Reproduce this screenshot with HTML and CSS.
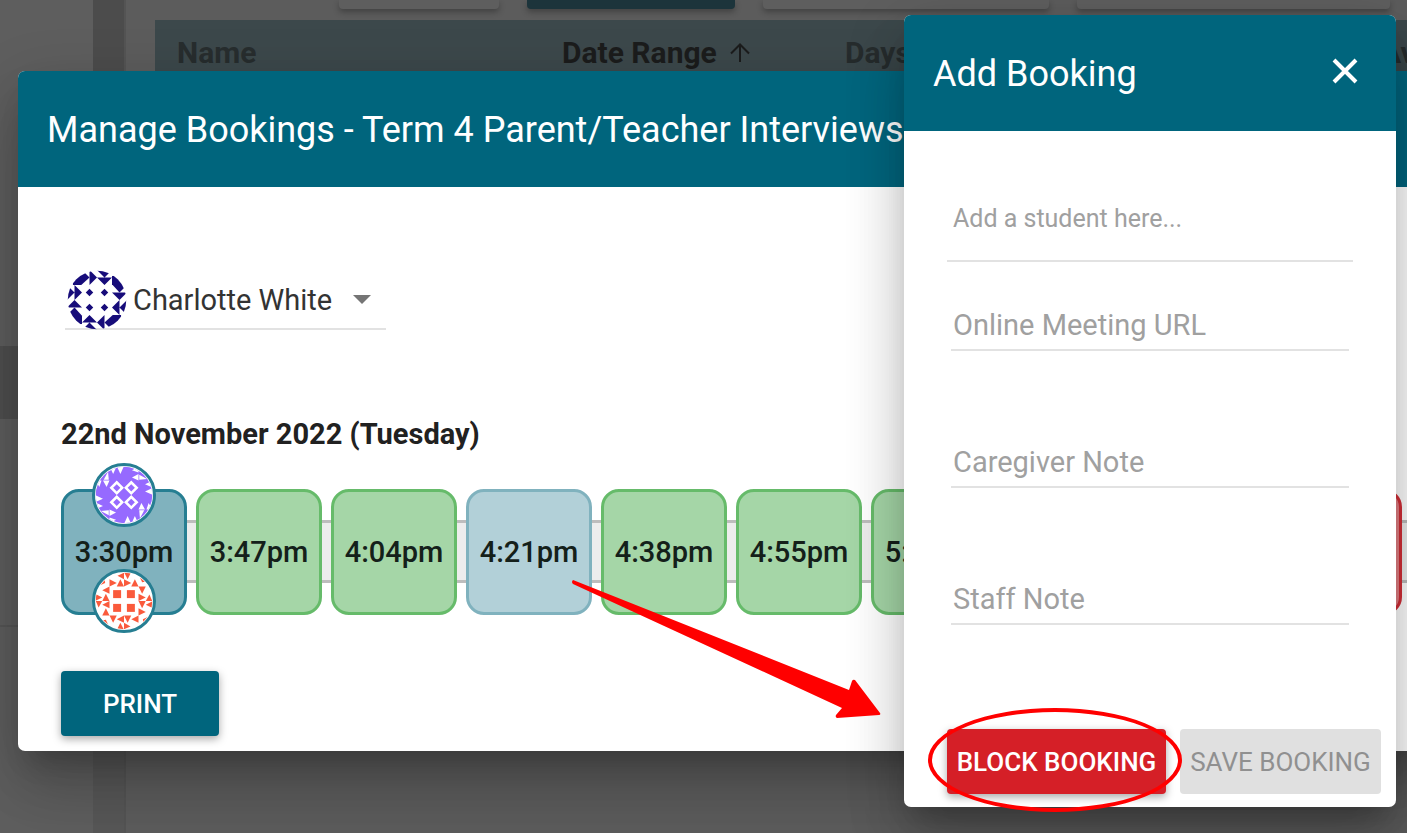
FILE: index.html
```
<!DOCTYPE html>
<html lang="en">
<head>
    <meta charset="UTF-8">
    <meta name="viewport" content="width=device-width, initial-scale=1.0">
    <title>Manage Bookings</title>
    <link rel="stylesheet" href="styles.css">
</head>
<body>
    <!-- Dimmed page behind the dialogs -->
    <div class="page">
        <nav class="sidebar">
            <div class="sidebar-item active"></div>
            <div class="sidebar-item"></div>
        </nav>
        <div class="scrollbar"><div class="scrollbar-thumb"></div></div>
        <main class="content">
            <div class="toolbar">
                <div class="tool small"></div>
                <div class="tool primary"></div>
                <div class="tool medium"></div>
                <div class="tool large"></div>
            </div>
            <table class="interviews">
                <thead>
                    <tr>
                        <th class="col-name">Name</th>
                        <th class="col-range sorted">Date Range
                            <svg class="sort-icon" viewBox="0 0 20 20"><path d="M10 19V2M1 10.500L10 1.500L19 10.500"/></svg>
                        </th>
                        <th class="col-days">Days</th>
                        <th>Av</th>
                    </tr>
                </thead>
            </table>
        </main>
    </div>

    <section class="dialog manage-dialog">
        <header class="dialog-header">
            <h1>Manage Bookings - Term 4 Parent/Teacher Interviews</h1>
        </header>
        <div class="manage-body">
            <div class="staff-picker">
                <svg class="avatar" viewBox="0 0 80 80">
                    <defs>
                        <clipPath id="round"><circle cx="40" cy="40" r="39"/></clipPath>
                        <g id="navyQuarter">
                            <path d="M8 20H19L30 10L20 0H6Z"/>
                            <path d="M30 0L40 10L30 20Z"/>
                            <path d="M0 20L10 30L0 40ZM10 20L20 30L10 40Z"/>
                            <path d="M30 25L35 30L30 35L25 30Z"/>
                        </g>
                    </defs>
                    <g clip-path="url(#round)" fill="#170c7a">
                        <use href="#navyQuarter"/>
                        <use href="#navyQuarter" transform="rotate(90 40 40)"/>
                        <use href="#navyQuarter" transform="rotate(180 40 40)"/>
                        <use href="#navyQuarter" transform="rotate(270 40 40)"/>
                    </g>
                </svg>
                <select aria-label="Staff member">
                    <option>Charlotte White</option>
                </select>
                <svg class="caret" viewBox="0 0 18 9"><path d="M0 0H18L9 9Z"/></svg>
            </div>

            <h2>22nd November 2022 (Tuesday)</h2>

            <div class="slots">
                <div class="slot booked">
                    <svg class="badge top" viewBox="0 0 80 80">
                        <defs>
                            <g id="purpleQuarter">
                                <path d="M20 0H30L25 11ZM30 0H40L35 11Z"/>
                                <path d="M1 20H9L6 29ZM11 20H20L16 29Z"/>
                                <path d="M12 19L18 8L19 19Z"/>
                                <path fill-rule="evenodd" d="M30 20L40 30L30 40L20 30ZM30 25L25 30L30 35L35 30Z"/>
                            </g>
                        </defs>
                        <g clip-path="url(#round)" fill="#fff">
                            <rect width="80" height="80" fill="#966aff"/>
                            <use href="#purpleQuarter"/>
                            <use href="#purpleQuarter" transform="rotate(90 40 40)"/>
                            <use href="#purpleQuarter" transform="rotate(180 40 40)"/>
                            <use href="#purpleQuarter" transform="rotate(270 40 40)"/>
                        </g>
                    </svg>
                    3:30pm
                    <svg class="badge bottom" viewBox="0 0 80 80">
                        <defs>
                            <g id="orangeQuarter">
                                <path d="M40 1V10L31 5Z"/>
                                <path d="M20 10L30 15L20 20Z"/>
                                <path d="M30 20H40L35 10Z"/>
                                <path d="M20 20V30L10 25Z"/>
                                <path d="M0 30L10 35L0 40Z"/>
                                <path d="M10 40H20L15 30Z"/>
                                <path d="M3 20L14 15L13 9L6 10Z"/>
                                <rect x="25" y="25" width="11" height="11"/>
                            </g>
                        </defs>
                        <g clip-path="url(#round)" fill="#fa5a3c">
                            <rect width="80" height="80" fill="#fff"/>
                            <use href="#orangeQuarter"/>
                            <use href="#orangeQuarter" transform="rotate(90 40 40)"/>
                            <use href="#orangeQuarter" transform="rotate(180 40 40)"/>
                            <use href="#orangeQuarter" transform="rotate(270 40 40)"/>
                        </g>
                    </svg>
                </div>
                <div class="slot">3:47pm</div>
                <div class="slot">4:04pm</div>
                <div class="slot selected">4:21pm</div>
                <div class="slot">4:38pm</div>
                <div class="slot">4:55pm</div>
                <div class="slot">5:12pm</div>
                <div class="slot"></div>
                <div class="slot"></div>
                <div class="slot blocked"></div>
            </div>

            <button class="btn btn-print">PRINT</button>
        </div>
    </section>

    <section class="dialog add-dialog">
        <header class="dialog-header">
            <h1>Add Booking</h1>
            <button class="close" aria-label="Close">
                <svg viewBox="0 0 26 26"><path d="M2 2L24 24M24 2L2 24"/></svg>
            </button>
        </header>
        <form class="add-form">
            <input class="student" type="text" placeholder="Add a student here..." aria-label="Student">
            <input class="field url" type="text" placeholder="Online Meeting URL" aria-label="Online Meeting URL">
            <input class="field" type="text" placeholder="Caregiver Note" aria-label="Caregiver Note">
            <input class="field" type="text" placeholder="Staff Note" aria-label="Staff Note">
            <div class="actions">
                <button type="button" class="btn btn-block">BLOCK BOOKING</button>
                <button type="button" class="btn btn-save" disabled>SAVE BOOKING</button>
            </div>
        </form>
    </section>

    <!-- Arrow from the selected slot to the block button -->
    <svg class="arrow" viewBox="0 0 310 140"><path d="M2 0L278 110L281 101Q282 99 284 100L309 133Q310 135 308 135L266 138Q264 137 265 135L271 128L2 4Q0 2 2 0Z"/></svg>
</body>
</html>
```
FILE: styles.css
```
* {
    margin: 0;
    padding: 0;
    box-sizing: border-box;
}

body {
    font-family: Roboto, "Liberation Sans", sans-serif;
    background: #5e5e5e;
    color: #212121;
    position: relative;
    min-height: 100vh;
    overflow: hidden;
}

button,
input,
select {
    font-family: inherit;
    border: none;
    outline: none;
    background: none;
}

/* Page behind */
.page {
    display: flex;
    height: 100vh;
}

.sidebar {
    width: 93px;
    padding-top: 346px;
}

.sidebar-item {
    height: 208px;
    border-bottom: 2px solid #565656;
}

.sidebar-item.active {
    height: 73px;
    background: #4f4f4f;
    border: none;
}

.scrollbar {
    width: 33px;
    background: #575757;
    border-right: 2px solid #545454;
}

.scrollbar-thumb {
    height: 500px;
    background: #4c4c4c;
}

.content {
    flex: 1;
    min-width: 0;
    padding-left: 29px;
    background: #5c5c5c;
    overflow: hidden;
}

.toolbar {
    display: flex;
    gap: 28px;
    padding-left: 184px;
    margin-bottom: 11px;
}

.tool {
    flex: none;
    height: 9px;
    background: #5e5e5e;
    border-radius: 0 0 4px 4px;
    box-shadow: 0 3px 6px rgba(0,0,0,0.3);
}

.tool.small {
    width: 160px;
}

.tool.primary {
    width: 208px;
    background: #1c343b;
}

.tool.medium {
    width: 286px;
}

.tool.large {
    width: 313px;
}

.interviews {
    width: 1400px;
    table-layout: fixed;
    border-collapse: collapse;
    background: #3c484b;
}

.interviews th {
    height: 64px;
    padding-left: 22px;
    text-align: left;
    font-size: 30px;
    font-weight: 700;
    color: #272d2e;
}

.interviews th.sorted {
    color: #1b1c1c;
}

.col-name {
    width: 385px;
}

.col-range {
    width: 283px;
}

.col-days {
    width: 536px;
}

.sort-icon {
    width: 20px;
    height: 20px;
    margin-left: 6px;
    fill: none;
    stroke: #1b1c1c;
    stroke-width: 2;
}

/* Dialogs */
.dialog {
    position: absolute;
    background: #fff;
    border-radius: 7px;
    box-shadow: 0 20px 27px -13px rgba(0,0,0,0.2),
                0 43px 60px 0 rgba(0,0,0,0.14),
                0 16px 60px 4px rgba(0,0,0,0.14);
}

.dialog-header {
    display: flex;
    justify-content: space-between;
    padding: 37px 29px 35px;
    background: #00657d;
    color: #fff;
    border-radius: 7px 7px 0 0;
}

.dialog-header h1 {
    font-size: 36px;
    line-height: 44px;
    font-weight: 400;
    white-space: nowrap;
}

.manage-dialog {
    top: 71px;
    left: 18px;
    right: -18px;
}

.manage-body {
    padding: 83px 43px 15px;
}

.staff-picker {
    display: flex;
    align-items: flex-start;
    width: 321px;
    height: 60px;
    margin-left: 4px;
    padding: 0 15px 0 2px;
    border-bottom: 2px solid #e2e2e2;
}

.avatar {
    flex: none;
    width: 60px;
    height: 60px;
}

.staff-picker select {
    flex: 1;
    appearance: none;
    height: 60px;
    padding-left: 6px;
    font-size: 29px;
    color: #333;
}

.caret {
    width: 18px;
    height: 9px;
    margin-top: 25px;
    fill: #757575;
}

.manage-body h2 {
    margin: 84px 0 35px;
    font-size: 29px;
    line-height: 40px;
    font-weight: 700;
}

.slots {
    display: flex;
    gap: 9px;
    margin-right: -43px;
    /* track running behind the slots */
    background: linear-gradient(#bdbdbd, #bdbdbd) 0 31px / 100% 3px no-repeat,
                linear-gradient(#bdbdbd, #bdbdbd) 0 91px / 100% 3px no-repeat,
                linear-gradient(#ededed, #ededed) 0 33px / 100% 60px no-repeat;
}

.slot {
    position: relative;
    flex: none;
    display: flex;
    align-items: center;
    justify-content: center;
    width: 126px;
    height: 126px;
    border: 3px solid #66bb6a;
    border-radius: 18px;
    background: #a5d6a7;
    color: #14201a;
    font-size: 29px;
    font-weight: 500;
}

.slot.booked {
    background: #80b2be;
    border-color: #267e92;
}

.slot.selected {
    background: #b2d0d8;
    border-color: #80b2be;
}

.slot.blocked {
    background: #e57f84;
    border-color: #d32f38;
}

.badge {
    position: absolute;
    left: 28px;
    width: 64px;
    height: 64px;
    border: 3px solid #267e92;
    border-radius: 50%;
    background: #fff;
}

.badge.top {
    top: -29px;
}

.badge.bottom {
    bottom: -21px;
}

.btn {
    height: 65px;
    border-radius: 4px;
    font-size: 26px;
    font-weight: 500;
    color: #fff;
    white-space: nowrap;
    box-shadow: 0 3px 8px rgba(0,0,0,0.35);
}

.btn-print {
    display: block;
    width: 158px;
    margin-top: 56px;
    background: #00657d;
}

.add-dialog {
    top: 15px;
    right: 11px;
    width: 492px;
}

.close {
    width: 26px;
    height: 26px;
    margin: 6px 9px 0 0;
}

.close svg {
    display: block;
    fill: none;
    stroke: #fff;
    stroke-width: 4;
}

.add-form {
    display: flex;
    flex-direction: column;
    padding: 71px 15px 13px 43px;
}

.add-form input {
    border-bottom: 2px solid #e2e2e2;
    border-radius: 0;
}

.add-form input::placeholder {
    color: #a0a0a0;
}

.student {
    height: 60px;
    margin-right: 28px;
    padding: 0 6px 26px;
    font-size: 25px;
}

.field {
    height: 45px;
    margin: 92px 32px 0 4px;
    padding: 0 2px 5px;
    font-size: 29px;
}

.field.url {
    margin-top: 44px;
}

.actions {
    display: flex;
    gap: 14px;
    margin-top: 104px;
}

.btn-block {
    position: relative;
    width: 219px;
    background: #d51f27;
}

/* hand-drawn ring round the button */
.btn-block::after {
    content: "";
    position: absolute;
    inset: -21px -16px -18px -19px;
    border: 4px solid #f00;
    border-radius: 50%;
    pointer-events: none;
}

.btn-save {
    width: 201px;
    background: #e0e0e0;
    color: #909090;
    font-weight: 400;
    box-shadow: none;
}

.arrow {
    position: absolute;
    top: 580px;
    left: 571px;
    width: 310px;
    height: 140px;
    fill: #f00;
    pointer-events: none;
}
```
